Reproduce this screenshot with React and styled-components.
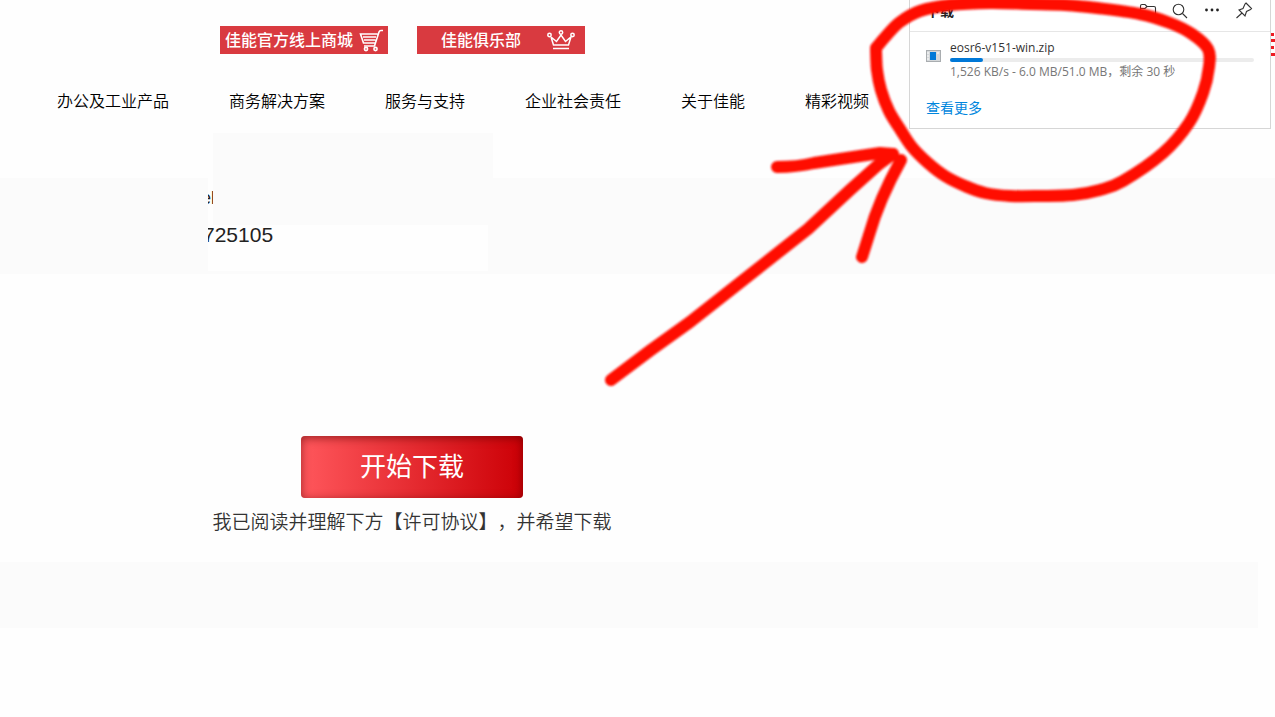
import React from "react";
import styled, { createGlobalStyle } from "styled-components";

const GlobalStyle = createGlobalStyle`
  * { box-sizing: border-box; }
  body {
    margin: 0;
    background: #fefefe;
    color: #000;
    font-family: "Noto Sans CJK SC", sans-serif;
    text-spacing-trim: space-all;
  }
  a { color: inherit; text-decoration: none; }
  button { font-family: inherit; border: 0; padding: 0; background: none; }
`;

const Page = styled.div`
  position: relative;
  min-height: 100vh;
  overflow: hidden;
`;

const Header = styled.header`
  height: 178px;
  padding-top: 26px;
`;

const ShopLinks = styled.div`
  display: flex;
  gap: 29px;
  padding-left: 220px;
`;

const ShopLink = styled.a`
  display: flex;
  align-items: center;
  justify-content: space-between;
  width: 168px;
  height: 28px;
  padding: 0 ${(p) => p.$end}px 0 ${(p) => p.$start}px;
  background: #d93a40;
  color: #fff;
  font-size: 16px;
  line-height: 24px;
  font-weight: 500;
  white-space: nowrap;

  span { padding-bottom: 2px; }
`;

const Nav = styled.nav`
  display: flex;
  gap: 60px;
  margin-top: 34px;
  padding-left: 57px;
  font-size: 16px;
  line-height: 24px;
  font-weight: 350;
  white-space: nowrap;
`;

const MenuButton = styled.button`
  position: absolute;
  top: 33px;
  right: 0;
  width: 4px;
  height: 24px;
  display: flex;
`;

const ProductBand = styled.section`
  height: 96px;
  padding-left: 208px;
  background: #fbfbfb;
`;

const ProductCard = styled.div`
  position: relative;
  width: 280px;
  height: 93px;
  padding-top: 8px;
  background: #fefefe;
  color: #222;
  font-family: "Liberation Sans", Arial, sans-serif;
`;

const CardCover = styled.div`
  position: absolute;
  top: -45px;
  left: 5px;
  width: 280px;
  height: 92px;
  background: #fbfbfb;
`;

const Model = styled.div`
  display: flex;
  justify-content: flex-end;
  width: 7px;
  overflow: hidden;
  font-size: 18px;
  line-height: 24px;
`;

const Code = styled.div`
  margin-top: 12px;
  overflow: hidden;
  font-size: 21px;
  line-height: 26px;
  text-indent: -5px;
`;

const DownloadSection = styled.main`
  display: flex;
  flex-direction: column;
  align-items: center;
  width: 824px;
  height: 288px;
  padding-top: 162px;
`;

const StartButton = styled.button`
  width: 222px;
  height: 62px;
  padding-bottom: 4px;
  border-radius: 4px;
  background: linear-gradient(90deg, #ff575c, #cc0006);
  box-shadow: inset 0 2px 10px rgba(90, 0, 0, 0.6);
  color: #fff;
  font-size: 26px;
  line-height: 56px;
`;

const Agreement = styled.p`
  margin: 9px 0 0;
  color: #333;
  font-size: 19px;
  font-weight: 350;
  line-height: 28px;
  white-space: nowrap;
`;

const FooterBand = styled.footer`
  height: 66px;
  margin-right: 17px;
  background: #fbfbfb;
`;

const Panel = styled.aside`
  position: absolute;
  top: 0;
  right: 4px;
  width: 362px;
  height: 129px;
  border: 1px solid #d6d6d6;
  border-top: 0;
  background: #fff;
  font-family: "Open Sans", "Noto Sans CJK SC", sans-serif;
  white-space: nowrap;
`;

const PanelHeader = styled.div`
  display: flex;
  justify-content: space-between;
  height: 32px;
  padding: 0 16px;
  border-bottom: 1px solid #e6e6e6;
`;

const PanelTitle = styled.h2`
  margin: 0;
  color: #222;
  font-size: 14px;
  font-weight: 600;
  line-height: 22px;
`;

const PanelTools = styled.div`
  display: flex;
  align-items: flex-start;
  gap: 12px;
`;

const ToolButton = styled.button`
  display: flex;
  width: 20px;
  height: 22px;
`;

const FileRow = styled.div`
  display: flex;
  gap: 9px;
  padding: 8px 16px 0;
`;

const FileIcon = styled.svg`
  flex: none;
  margin-top: 10px;
`;

const FileInfo = styled.div`
  flex: 1;
`;

const FileName = styled.div`
  color: #333;
  font-size: 12px;
  line-height: 16px;
`;

const Track = styled.div`
  height: 4px;
  margin-top: 2px;
  border-radius: 2px;
  background: #ececec;
`;

const Progress = styled.div`
  height: 4px;
  border-radius: 2px;
  background: #0078d7;
`;

const FileStatus = styled.div`
  margin-top: 2px;
  color: #777;
  font-size: 12px;
  line-height: 16px;
`;

const MoreLink = styled.a`
  display: inline-block;
  margin: 18px 0 0 16px;
  color: #0086dd;
  font-size: 14px;
  line-height: 20px;
`;

const Marker = styled.svg`
  position: absolute;
  top: 0;
  right: 0;
  pointer-events: none;
`;

const navItems = ["办公及工业产品", "商务解决方案", "服务与支持", "企业社会责任", "关于佳能", "精彩视频"];

const circlePoints = [
  [876, 48], [887, 35], [900, 22], [920, 11], [950, 5], [990, 3], [1030, 4], [1065, 5],
  [1097, 8], [1140, 14], [1170, 23], [1192, 34], [1208, 49], [1209, 67], [1203, 93],
  [1189, 123], [1163, 153], [1123, 181], [1100, 190], [1073, 195], [1040, 196], [1010, 196],
  [985, 193], [965, 186], [945, 176], [928, 163], [912, 147], [900, 129], [889, 111],
  [881, 90], [877, 70], [876, 50],
];

const smoothPath = (points) =>
  points.reduce((d, [x, y], i) => {
    if (i === 0) return `M${x} ${y}`;
    const before = points[Math.max(i - 2, 0)];
    const from = points[i - 1];
    const after = points[Math.min(i + 1, points.length - 1)];
    const c1 = [from[0] + (x - before[0]) / 6, from[1] + (y - before[1]) / 6];
    const c2 = [x - (after[0] - from[0]) / 6, y - (after[1] - from[1]) / 6];
    return `${d}C${c1} ${c2} ${x},${y}`;
  }, "");

const CartIcon = () => (
  <svg width="25" height="24" viewBox="0 0 25 24" fill="none" stroke="#fff" strokeWidth="1.6">
    <path d="M24 2.5H22Q20.5 2.5 20 4L15.5 18H5M18.5 6H1.5L4.5 15H16M4 9H17M5 12H16.5" />
    <circle cx="7" cy="21" r="1.6" />
    <circle cx="16.5" cy="21" r="1.6" />
  </svg>
);

const CrownIcon = () => (
  <svg width="28" height="22" viewBox="0 0 28 22" fill="none" stroke="#fff" strokeWidth="1.5">
    <circle cx="2.5" cy="6" r="1.7" />
    <circle cx="14" cy="3.5" r="1.7" />
    <circle cx="25.5" cy="6" r="1.7" />
    <path d="M4 8L6.5 16H21.5L24 8L18.5 12.5L14 6L9.5 12.5L4 8M6 19.5H22" />
  </svg>
);

const ToolIcon = ({ children }) => (
  <svg width="20" height="22" viewBox="0 0 20 22" fill="none" stroke="#333" strokeWidth="1.1">
    {children}
  </svg>
);

export default function App() {
  return (
    <Page>
      <GlobalStyle />
      <Header>
        <ShopLinks>
          <ShopLink href="#shop" $start={5} $end={4}><span>佳能官方线上商城</span><CartIcon /></ShopLink>
          <ShopLink href="#club" $start={24} $end={10}><span>佳能俱乐部</span><CrownIcon /></ShopLink>
        </ShopLinks>
        <Nav>
          {navItems.map((item) => <a href="#nav" key={item}>{item}</a>)}
        </Nav>
        <MenuButton aria-label="菜单">
          <svg width="4" height="24" viewBox="0 0 4 24" fill="#ed1c24">
            <path d="M0 0H3V3H0ZM0 6H4V9H0ZM0 13H3V16H0ZM0 20H4V23H0Z" />
          </svg>
        </MenuButton>
      </Header>
      <ProductBand>
        <ProductCard>
          <Model>el</Model>
          <Code>725105</Code>
          <CardCover />
        </ProductCard>
      </ProductBand>
      <DownloadSection>
        <StartButton>开始下载</StartButton>
        <Agreement>我已阅读并理解下方【许可协议】，并希望下载</Agreement>
      </DownloadSection>
      <FooterBand />

      <Panel>
        <PanelHeader>
          <PanelTitle>下载</PanelTitle>
          <PanelTools>
            <ToolButton aria-label="打开文件夹">
              <ToolIcon><path d="M2.5 16V6Q2.5 4.5 4 4.5H7L9 6.5H16Q17.5 6.5 17.5 8V16ZM2.5 8.5H7L9 6.5" /></ToolIcon>
            </ToolButton>
            <ToolButton aria-label="搜索">
              <ToolIcon><circle cx="8.5" cy="9.5" r="5.3" /><path d="M12.5 13.5L17 18" /></ToolIcon>
            </ToolButton>
            <ToolButton aria-label="更多">
              <ToolIcon>
                <g fill="#222" stroke="none">
                  <circle cx="4.5" cy="10" r="1.4" /><circle cx="10" cy="10" r="1.4" /><circle cx="15.5" cy="10" r="1.4" />
                </g>
              </ToolIcon>
            </ToolButton>
            <ToolButton aria-label="固定">
              <ToolIcon><path d="M12 3L17.5 8.5L16.5 9.5L12.5 11.5L11 16L5 10L9 8.5L11 4ZM8 13L2.5 18" /></ToolIcon>
            </ToolButton>
          </PanelTools>
        </PanelHeader>
        <FileRow>
          <FileIcon width="15" height="12" viewBox="0 0 15 12">
            <path d="M0 0H15V12H0Z" fill="#a9adb0" />
            <path d="M1 1H14V11H1Z" fill="#d5d8da" />
            <path d="M4 2H10V10H4Z" fill="#0078d7" />
            <path d="M1 3H3M1 6H3M1 9H3M11 3H13" stroke="#fff" />
          </FileIcon>
          <FileInfo>
            <FileName>eosr6-v151-win.zip</FileName>
            <Track><Progress style={{ width: "11%" }} /></Track>
            <FileStatus>1,526 KB/s - 6.0 MB/51.0 MB，剩余 30 秒</FileStatus>
          </FileInfo>
        </FileRow>
        <MoreLink href="#downloads">查看更多</MoreLink>
      </Panel>

      <Marker width="675" height="400" viewBox="600 0 675 400" fill="none" stroke="#ff1000" strokeWidth="12" strokeLinecap="round" strokeLinejoin="round">
        <defs>
          <filter id="soft"><feGaussianBlur stdDeviation="0.9" /></filter>
        </defs>
        <g filter="url(#soft)">
          <path d={smoothPath(circlePoints)} />
          <path d="M611 380Q650 350 690 322L737 285L808 229L850 190L878 165L893 154" />
          <path d="M777 167Q797 167 814 163L840 159L880 153L893 154M862 257L869 235C876 210 886 187 901 160" />
        </g>
      </Marker>
    </Page>
  );
}
